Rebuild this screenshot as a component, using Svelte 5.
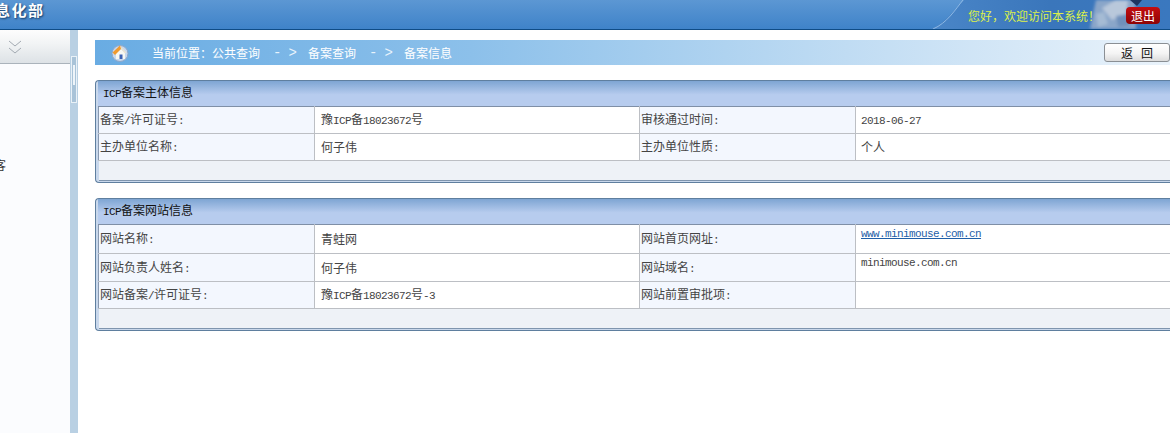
<script>
  const crumbs = ['当前位置：公共查询', '备案查询', '备案信息'];

  const subject = [
    ['备案/许可证号:', '豫ICP备18023672号', '审核通过时间:', '2018-06-27'],
    ['主办单位名称:', '何子伟', '主办单位性质:', '个人']
  ];

  const site = [
    ['网站名称:', '青蛙网', '网站首页网址:', 'www.minimouse.com.cn'],
    ['网站负责人姓名:', '何子伟', '网站域名:', 'minimouse.com.cn'],
    ['网站备案/许可证号:', '豫ICP备18023672号-3', '网站前置审批项:', '']
  ];

  const panels = [
    { title: 'ICP备案主体信息', rows: subject, kind: 'subject' },
    { title: 'ICP备案网站信息', rows: site, kind: 'site' }
  ];

  // latin runs are drawn in the mono face, like the old bitmap font
  function parts(text) {
    return text.match(/[\x00-\x7f]+|[^\x00-\x7f]+/g) ?? [];
  }
</script>

{#snippet mixed(text)}{#each parts(text) as part}{#if part.charCodeAt(0) < 128}<span class="latin">{part}</span>{:else}{part}{/if}{/each}{/snippet}

<div class="page">
  <header class="topbar">
    <h1 class="brand">息化部</h1>
    <svg class="deco" width="240" height="29" viewBox="0 0 240 29" aria-hidden="true">
      <defs>
        <linearGradient id="decoFill" x1="0" x2="1" y1="0" y2="0">
          <stop offset="0" stop-color="#4a86c8" />
          <stop offset="0.5" stop-color="#3a76bb" />
          <stop offset="1" stop-color="#3a78bf" />
        </linearGradient>
        <filter id="soft" x="-20%" y="-20%" width="140%" height="140%">
          <feGaussianBlur stdDeviation="1.5" />
        </filter>
      </defs>
      <path d="M0 29C14 24 24 10 34 0H240V29Z" fill="url(#decoFill)" />
      <path d="M3 29C17 23 25 10 33 0" fill="none" stroke="#8db8e4" stroke-width="1" />
      <g filter="url(#soft)">
        <path d="M160 29L166 0H205L206 29Z" fill="#8aa6c9" />
        <path d="M172 8L186 0H198L196 14L182 20Z" fill="#b9c8db" />
        <path d="M166 14L174 12L178 24L168 27Z" fill="#a5bbd4" />
        <path d="M186 16L198 14L200 26L188 27Z" fill="#6f90bb" />
      </g>
      <path d="M200 0H212L207 6Z" fill="#1e3560" />
    </svg>
    <div class="greeting">
      <span class="welcome">您好，欢迎访问本系统！</span>
      <button class="logout">退出</button>
    </div>
  </header>

  <div class="body">
    <aside class="sidebar">
      <div class="side-head">
        <svg width="14" height="14" viewBox="0 0 14 14" aria-hidden="true">
          <path d="M1 1L7 6L13 1M1 8L7 13L13 8" fill="none" stroke="#a3aab2" stroke-width="1" />
        </svg>
      </div>
      <div class="side-item">客</div>
    </aside>

    <div class="splitter">
      <div class="grip"></div>
    </div>

    <main class="content">
      <nav class="crumbs">
        <svg class="home" width="20" height="20" viewBox="0 0 20 20" aria-hidden="true">
          <circle cx="10" cy="10.5" r="8" fill="#c6d8ee" stroke="#8ea6c8" stroke-width="1" />
          <path d="M6 10V16H15V10L11 6Z" fill="#f7f7f2" />
          <rect x="9.5" y="11.5" width="3" height="4.5" fill="#3e63b5" />
          <path d="M2.5 9.5L10 2.5L12 5L5 12Z" fill="#f09a2e" />
          <path d="M10 2.5L16.5 9.5L15 10.5L11 6Z" fill="#e9e2d2" />
        </svg>
        <div class="trail">
          {#each crumbs as crumb, i}
            {#if i > 0}<span class="arrow">- &gt;</span>{/if}
            <span>{crumb}</span>
          {/each}
        </div>
        <button class="back">返&nbsp;&nbsp;&nbsp;回</button>
      </nav>

      {#each panels as panel}
        <section class="panel {panel.kind}">
          <h2 class="panel-title">{@render mixed(panel.title)}</h2>
          <table>
            <colgroup>
              <col class="c1" />
              <col class="c2" />
              <col class="c3" />
              <col />
            </colgroup>
            <tbody>
              {#each panel.rows as row}
                <tr>
                  <th>{@render mixed(row[0])}</th>
                  <td>{@render mixed(row[1])}</td>
                  <th>{@render mixed(row[2])}</th>
                  {#if row[3].startsWith('www')}
                    <td class="top"><a href="http://{row[3]}"><span class="latin">{row[3]}</span></a></td>
                  {:else if row[3].startsWith('mini')}
                    <td class="top"><span class="latin">{row[3]}</span></td>
                  {:else}
                    <td class="last">{@render mixed(row[3])}</td>
                  {/if}
                </tr>
              {/each}
            </tbody>
          </table>
          <div class="panel-foot"></div>
        </section>
      {/each}
    </main>
  </div>
</div>

<style>
  :global(body) {
    background: #fff;
  }

  .page {
    width: 1170px;
    height: 433px;
    overflow: hidden;
    font-family: "Noto Sans CJK SC", "Liberation Sans", sans-serif;
    font-size: 12px;
    line-height: 14px;
    color: #444;
  }

  .topbar {
    position: relative;
    display: flex;
    align-items: flex-start;
    justify-content: space-between;
    box-sizing: border-box;
    height: 30px;
    background: linear-gradient(#5c97d3, #3f83c9);
    border-bottom: 1px solid #0f4c86;
  }

  .brand {
    margin: 0 0 0 -5px;
    padding-top: 1px;
    font-size: 15px;
    line-height: 18px;
    font-weight: 700;
    letter-spacing: 1.5px;
    color: #fff;
    text-shadow: 1px 1px 2px #123a66;
  }

  .deco {
    position: absolute;
    right: 0;
    top: 0;
  }

  .greeting {
    position: relative;
    display: flex;
    align-items: center;
    gap: 25px;
    padding: 7px 10px 0 0;
  }

  .welcome {
    color: #dcf04a;
    line-height: 16px;
    width: 133px;
    white-space: nowrap;
  }

  .logout {
    width: 34px;
    height: 17px;
    padding: 0;
    border: 0;
    border-radius: 4px;
    background: linear-gradient(#c40d10, #8e0406);
    color: #fff;
    font: inherit;
    line-height: 16px;
  }

  .body {
    display: flex;
    height: 403px;
  }

  .sidebar {
    flex: none;
    width: 70px;
    background: #fbfcfe;
  }

  .side-head {
    box-sizing: border-box;
    height: 34px;
    padding: 10px 0 0 8px;
    background: linear-gradient(#fdfdfd, #f2f4f5 40%, #dde2e6);
    border-bottom: 1px solid #aab3bb;
  }

  .side-item {
    margin: 94px 0 0 -6px;
    color: #333;
  }

  .splitter {
    flex: none;
    width: 8px;
    background: #b9d0e3;
  }

  .grip {
    position: relative;
    box-sizing: border-box;
    width: 6px;
    height: 47px;
    margin: 26px 0 0 1px;
    background: #a9c3d8;
    border: 1px solid #e9f1f7;
  }

  .grip::after {
    content: '';
    position: absolute;
    left: 1px;
    top: 8px;
    width: 2px;
    height: 20px;
    background: #eef4f9;
  }

  .content {
    flex: none;
    width: 1092px;
    box-sizing: border-box;
    padding: 10px 0 0 17px;
    overflow: hidden;
  }

  .crumbs {
    display: flex;
    align-items: center;
    width: 1075px;
    height: 25px;
    margin-bottom: 15px;
    background: linear-gradient(90deg, #69ace3, #8cc0ea 35%, #c0dcf3 70%, #eaf3fb);
    position: relative;
  }

  .home {
    margin-left: 15px;
    flex: none;
  }

  .trail {
    display: flex;
    align-items: center;
    gap: 13px;
    margin-left: 22px;
    color: #fff;
  }

  .arrow {
    width: 22px;
    font-family: "Liberation Mono", monospace;
    font-size: 14px;
    letter-spacing: -0.7px;
    color: #e8f3fc;
    white-space: nowrap;
  }

  .back {
    position: absolute;
    left: 1009px;
    top: 3px;
    width: 66px;
    height: 19px;
    padding: 0;
    border: 1px solid #8a8f94;
    border-radius: 3px;
    background: linear-gradient(#fff, #f4f4f4 55%, #dcdcdc);
    color: #111;
    font: inherit;
    line-height: 16px;
  }

  .panel {
    width: 1095px;
    box-sizing: border-box;
    margin-bottom: 15px;
    padding: 0 0 1px 2px;
    border: 1px solid #5f7f9f;
    border-right: 0;
    border-radius: 4px 0 0 4px;
    background: #c9d8ec;
  }

  .panel-title {
    box-sizing: border-box;
    height: 25px;
    margin: 0;
    padding: 4px 0 0 5px;
    font-size: 12px;
    line-height: 14px;
    font-weight: 400;
    color: #111;
    background: linear-gradient(#7ea5d3, #b7ccee 55%);
  }

  table {
    width: 100%;
    table-layout: fixed;
    border-collapse: collapse;
    background: #fff;
    border-top: 1px solid #7f8fa6;
    border-left: 1px solid #8999b0;
  }

  .c1 {
    width: 216px;
  }

  .c2 {
    width: 325px;
  }

  .c3 {
    width: 216px;
  }

  th,
  td {
    box-sizing: border-box;
    padding: 0 0 0 1px;
    border-bottom: 1px solid #bcbfc4;
    border-right: 1px solid #bcbfc4;
    font-weight: 400;
    text-align: left;
    white-space: nowrap;
    vertical-align: middle;
  }

  th {
    background: #f3f7fe;
  }

  td {
    padding-left: 6px;
    background: #fff;
  }

  td.top {
    padding-left: 5px;
    vertical-align: top;
  }

  td.last {
    padding-left: 5px;
  }

  .subject tr {
    height: 27px;
  }

  .site tr:nth-child(1) {
    height: 29px;
  }

  .site tr:nth-child(2) {
    height: 28px;
  }

  .site tr:nth-child(3) {
    height: 27px;
  }

  .panel-foot {
    box-sizing: border-box;
    height: 20px;
    margin-left: 1px;
    background: #eef2f7;
    border-bottom: 1px solid #7f95ae;
  }

  .latin {
    font-family: "Liberation Mono", monospace;
    font-size: 11px;
    letter-spacing: -0.6px;
  }

  a {
    color: #1f5fa8;
    text-decoration: underline;
  }
</style>
